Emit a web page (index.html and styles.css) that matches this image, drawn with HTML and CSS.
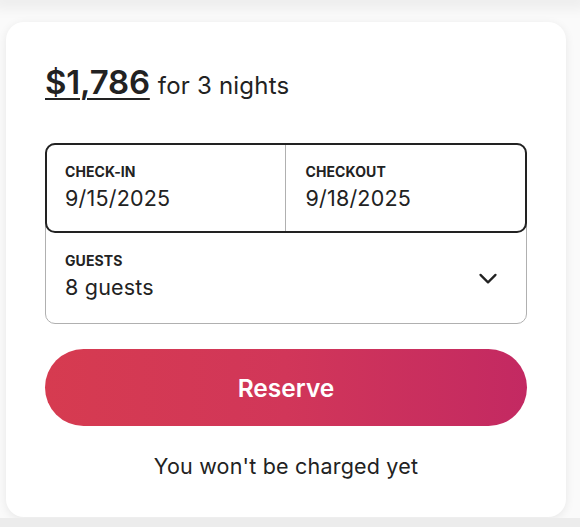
FILE: index.html
```html
<!DOCTYPE html>
<html>
<head>
<meta charset="utf-8">
<link rel="stylesheet" href="styles.css">
</head>
<body>
<div class="above"></div>
<div class="page">
  <div class="card">
    <div class="price">
      <span class="amount">$1,786</span>
      <span class="nights">for 3 nights</span>
    </div>
    <div class="picker">
      <div class="dates">
        <div class="field">
          <div class="label">CHECK-IN</div>
          <div class="value">9/15/2025</div>
        </div>
        <div class="field field-right">
          <div class="label">CHECKOUT</div>
          <div class="value">9/18/2025</div>
        </div>
      </div>
      <div class="guests">
        <div class="field">
          <div class="label">GUESTS</div>
          <div class="value">8 guests</div>
        </div>
        <svg class="chevron" viewBox="0 0 32 32" width="20" height="20" aria-hidden="true">
          <path d="M4 11 L16 23 L28 11" fill="none" stroke="#222" stroke-width="3.6" stroke-linecap="round" stroke-linejoin="round"/>
        </svg>
      </div>
    </div>
    <button class="reserve">Reserve</button>
    <p class="note">You won't be charged yet</p>
  </div>
</div>
<div class="below"></div>
</body>
</html>
```
FILE: styles.css
```css
* { box-sizing: border-box; }
html, body { margin: 0; padding: 0; }
body {
  width: 580px;
  height: 527px;
  overflow: hidden;
  background: #fafafa;
  font-family: "Inter", "Noto Sans", sans-serif;
  color: #222;
  position: relative;
}
.above {
  height: 0;
  box-shadow: 0 0 14px 8px rgba(0,0,0,0.06);
}
.page {
  padding: 22px 14px 0 6px;
}
.card {
  background: #fff;
  border-radius: 18px;
  height: 495px;
  padding: 40px 39px 0 39px;
  box-shadow: 0 2px 10px rgba(0,0,0,0.08);
}
.price {
  display: flex;
  align-items: baseline;
  gap: 8px;
  height: 42px;
  margin-bottom: 39px;
}
.amount {
  font-size: 33px;
  font-weight: 600;
  text-decoration: underline;
  text-decoration-thickness: 2px;
  text-underline-offset: 4px;
  letter-spacing: -0.2px;
}
.nights {
  font-size: 24px;
  font-weight: 400;
  letter-spacing: 0.2px;
}
.picker {
  border: 1px solid #b0b0b0;
  border-radius: 10px;
}
.dates {
  display: flex;
  border: 2px solid #222;
  border-radius: 10px;
  margin: -1px -1px 0 -1px;
  height: 90px;
}
.field {
  flex: 1;
  padding: 18px 18px 0 18px;
}
.field-right {
  border-left: 1px solid #b0b0b0;
  padding-left: 20px;
}
.label {
  font-size: 14px;
  font-weight: 700;
  letter-spacing: 0.1px;
  line-height: 17px;
}
.value {
  font-size: 21.5px;
  line-height: 28px;
  margin-top: 4px;
  letter-spacing: 0.2px;
}
.guests {
  display: flex;
  align-items: center;
  height: 90px;
  padding-right: 28px;
}
.guests .field { padding-top: 19px; padding-left: 19px; align-self: stretch; }
.chevron { display: block; margin-top: 0; }
.reserve {
  display: block;
  width: 100%;
  height: 77px;
  margin-top: 25px;
  border: none;
  border-radius: 40px;
  background: linear-gradient(to right, #d63b50 0%, #d13659 50%, #c32962 100%);
  color: #fff;
  font-family: inherit;
  font-size: 24.5px;
  font-weight: 600;
}
.note {
  margin: 27px 0 0;
  text-align: center;
  font-size: 21.5px;
  letter-spacing: 0.2px;
}
.below {
  position: absolute;
  left: 0;
  right: 0;
  bottom: 0;
  height: 9px;
  background: #ececec;
}
```
